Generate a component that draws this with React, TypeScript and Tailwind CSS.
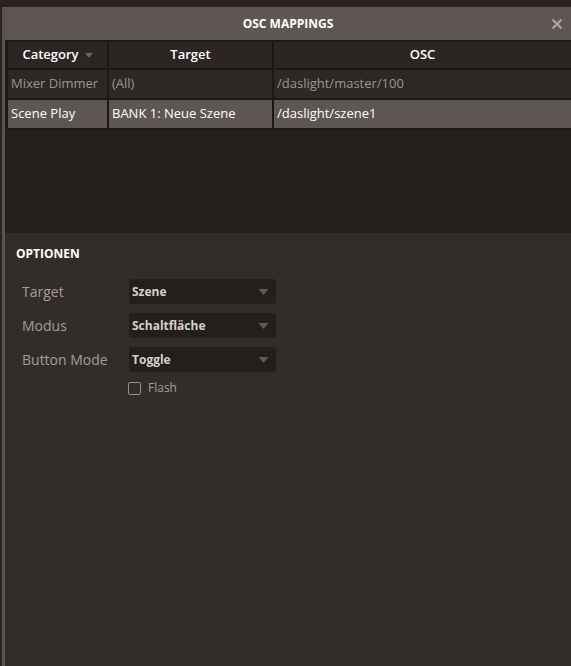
import React from "react";

const rows = [
  { category: "Mixer Dimmer", target: "(All)", osc: "/daslight/master/100", selected: false },
  { category: "Scene Play", target: "BANK 1: Neue Szene", osc: "/daslight/szene1", selected: true },
];

const options = [
  { label: "Target", value: "Szene" },
  { label: "Modus", value: "Schaltfläche" },
  { label: "Button Mode", value: "Toggle" },
];

function Caret({ className }: { className: string }) {
  return (
    <svg viewBox="0 0 10 6" className={className}>
      <path d="M0 0h10L5 6z" fill="currentColor" />
    </svg>
  );
}

export default function App() {
  return (
    <div
      className="flex h-[666px] w-[571px] flex-col overflow-hidden bg-[#2a2320] pt-[7px] pl-[2px]"
      style={{ fontFamily: '"Open Sans", "Liberation Sans", sans-serif' }}
    >
      <div className="flex flex-1 flex-col border-l-[3px] border-[#5b534f] bg-[#332d2a]">
        {/* title bar */}
        <div className="relative flex h-[33px] items-center justify-center bg-[#5e5652]">
          <span className="text-[12px] font-bold text-white">OSC MAPPINGS</span>
          <svg viewBox="0 0 12 12" className="absolute right-[8px] top-[11px] h-[12px] w-[12px] text-[#aaa39f]">
            <path d="M1.5 1.5l9 9M10.5 1.5l-9 9" stroke="currentColor" strokeWidth="2.2" />
          </svg>
        </div>

        {/* table */}
        <div className="flex h-[193px] flex-col bg-[#231f1c] pl-[1px]">
          <div className="grid grid-cols-[99px_163px_1fr] gap-[2px] bg-[#1c1816] py-[2px] pl-[2px]">
            <div className="flex h-[26px] items-center justify-center gap-[6px] bg-[#2b2624] text-[13px] font-semibold text-white">
              Category
              <Caret className="h-[5px] w-[8px] text-[#6a625e]" />
            </div>
            <div className="flex h-[26px] items-center justify-center bg-[#2b2624] text-[13px] font-semibold text-white">
              Target
            </div>
            <div className="flex h-[26px] items-center justify-center bg-[#2b2624] text-[13px] font-semibold text-white">
              OSC
            </div>
            {rows.map((r) =>
              [r.category, r.target, r.osc].map((c, i) => (
                <div
                  key={r.category + i}
                  className={`flex h-[28px] items-center px-[3px] text-[13px] ${
                    r.selected ? "bg-[#5e5652] text-white" : "bg-[#2d2826] text-[#9c9592]"
                  }`}
                >
                  {c}
                </div>
              ))
            )}
          </div>
          <div className="flex-1" />
        </div>

        {/* options */}
        <div className="flex flex-col px-[11px] pt-[12px]">
          <div className="text-[12px] font-bold text-white">OPTIONEN</div>
          <div className="mt-[16px] flex flex-col gap-[9px] pl-[6px]">
            {options.map((o) => (
              <div key={o.label} className="flex items-center">
                <span className="w-[107px] text-[14px] text-[#a39d9a]">{o.label}</span>
                <div className="flex h-[25px] w-[147px] items-center justify-between rounded-[3px] bg-[#231f1c] pr-[7px] pl-[3px]">
                  <span className="text-[12px] font-bold text-[#d6d0cc]">{o.value}</span>
                  <Caret className="h-[6px] w-[11px] text-[#5f5854]" />
                </div>
              </div>
            ))}
          </div>
          <label className="mt-[7px] ml-[112px] flex items-center gap-[7px]">
            <span className="h-[13px] w-[13px] rounded-[2px] border-[1.5px] border-[#938c88]" />
            <span className="text-[12px] text-[#a39d9a]">Flash</span>
          </label>
        </div>
      </div>
    </div>
  );
}
